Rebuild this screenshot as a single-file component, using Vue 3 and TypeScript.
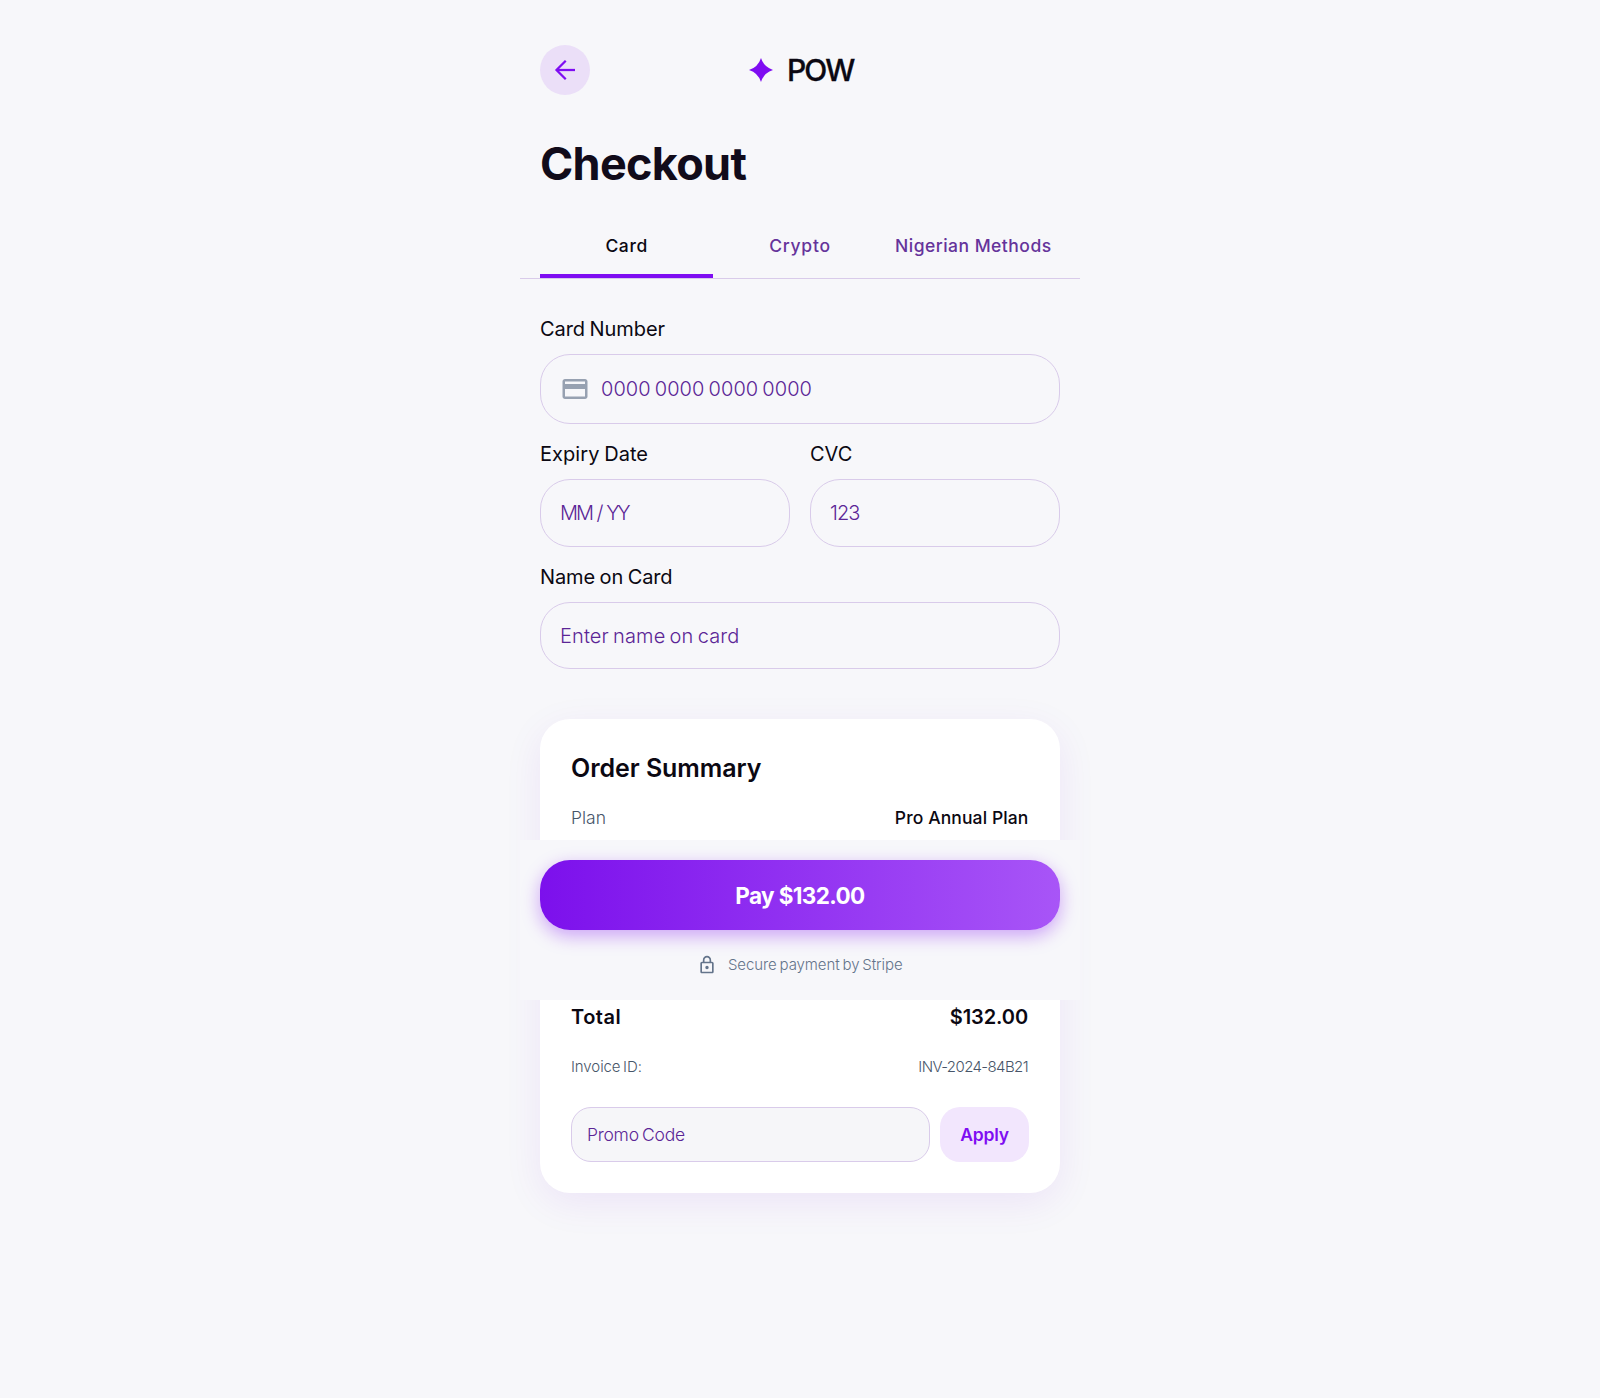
<script setup lang="ts">
import { ref } from 'vue'

type Method = 'card' | 'crypto' | 'nigerian'

interface Tab {
  id: Method
  label: string
}

const tabs: Tab[] = [
  { id: 'card', label: 'Card' },
  { id: 'crypto', label: 'Crypto' },
  { id: 'nigerian', label: 'Nigerian Methods' },
]

const active = ref<Method>('card')
const cardNumber = ref('')
const expiry = ref('')
const cvc = ref('')
const holder = ref('')
const promo = ref('')
</script>

<template>
  <main class="page">
    <header class="header">
      <button class="back" type="button">
        <svg width="30" height="30" viewBox="0 0 24 24" fill="none" stroke="currentColor" stroke-width="1.8">
          <path d="M20 12H5.4" />
          <path d="M12.6 4.6 5.2 12l7.4 7.4" />
        </svg>
      </button>
      <div class="logo">
        <svg width="30" height="30" viewBox="0 0 24 24" fill="currentColor">
          <path d="M12 2.4Q14.3 9.7 21.6 12Q14.3 14.3 12 21.6Q9.7 14.3 2.4 12Q9.7 9.7 12 2.4Z" />
        </svg>
        <span class="brand">POW</span>
      </div>
      <span class="spacer"></span>
    </header>

    <h1 class="title">Checkout</h1>

    <nav class="tabs">
      <button
        v-for="tab in tabs"
        :key="tab.id"
        type="button"
        class="tab"
        :class="[tab.id, { active: active === tab.id }]"
        @click="active = tab.id"
      >{{ tab.label }}</button>
    </nav>

    <form class="form" @submit.prevent>
      <label class="field">
        <span class="label number-label">Card Number</span>
        <span class="control with-icon">
          <svg width="30" height="30" viewBox="0 0 24 24" fill="currentColor">
            <path d="M20 4H4c-1.1 0-2 .9-2 2v12c0 1.1.9 2 2 2h16c1.1 0 2-.9 2-2V6c0-1.1-.9-2-2-2zm0 14H4v-6h16v6zm0-10H4V6h16v2z" />
          </svg>
          <input v-model="cardNumber" class="number" placeholder="0000 0000 0000 0000" />
        </span>
      </label>
      <div class="pair">
        <label class="field">
          <span class="label expiry-label">Expiry Date</span>
          <span class="control"><input v-model="expiry" class="expiry" placeholder="MM / YY" /></span>
        </label>
        <label class="field">
          <span class="label">CVC</span>
          <span class="control"><input v-model="cvc" class="cvc" placeholder="123" /></span>
        </label>
      </div>
      <label class="field">
        <span class="label name-label">Name on Card</span>
        <span class="control"><input v-model="holder" class="name" placeholder="Enter name on card" /></span>
      </label>
    </form>

    <section class="summary">
      <h2>Order Summary</h2>
      <div class="row plan">
        <span>Plan</span>
        <span class="value">Pro Annual Plan</span>
      </div>
      <div class="row total">
        <span>Total</span>
        <span class="amount">$132.00</span>
      </div>
      <div class="row invoice">
        <span>Invoice ID:</span>
        <span class="id">INV-2024-84B21</span>
      </div>
      <div class="promo">
        <input v-model="promo" placeholder="Promo Code" />
        <button type="button">Apply</button>
      </div>
    </section>

    <footer class="paybar">
      <button class="pay" type="button">Pay $132.00</button>
      <p class="secure">
        <svg width="20" height="20" viewBox="0 0 24 24" fill="currentColor">
          <path d="M18 8h-1V6c0-2.76-2.24-5-5-5S7 3.24 7 6v2H6c-1.1 0-2 .9-2 2v10c0 1.1.9 2 2 2h12c1.1 0 2-.9 2-2V10c0-1.1-.9-2-2-2zM9 6c0-1.66 1.34-3 3-3s3 1.34 3 3v2H9V6zm9 14H6V10h12v10zm-6-3c1.1 0 2-.9 2-2s-.9-2-2-2-2 .9-2 2 .9 2 2 2z" />
        </svg>
        <span>Secure payment by Stripe</span>
      </p>
    </footer>
  </main>
</template>

<style>
body {
  background: #f7f7fa;
}
</style>

<style scoped>
.page {
  position: relative;
  box-sizing: border-box;
  width: 560px;
  min-height: 1398px;
  margin: 0 auto;
  padding-top: 45px;
  font-family: Inter, "Noto Sans", sans-serif;
  color: #0b0812;
}

button,
input {
  box-sizing: border-box;
  margin: 0;
  border: 0;
  padding: 0;
  background: none;
  font: inherit;
  color: inherit;
  outline: none;
}

svg {
  display: block;
  flex: none;
}

.header {
  display: flex;
  align-items: center;
  justify-content: space-between;
  height: 50px;
  padding: 0 20px;
}

.back {
  display: flex;
  align-items: center;
  justify-content: center;
  width: 50px;
  height: 50px;
  border-radius: 50%;
  background: #ebdff8;
  color: #7f0df2;
}

.logo {
  display: flex;
  align-items: center;
  gap: 10.5px;
  color: #7f0df2;
}

.brand {
  font-size: 30px;
  font-weight: 500;
  line-height: 40px;
  letter-spacing: -1.8px;
  color: #0b0812;
  -webkit-text-stroke: 0.3px #0b0812;
}

.spacer {
  width: 50px;
}

.title {
  margin: 40px 20px 0;
  padding-top: 1px;
  font-size: 45px;
  font-weight: 650;
  line-height: 56px;
  letter-spacing: -0.7px;
  color: #110b1a;
}

.tabs {
  display: flex;
  height: 58px;
  margin-top: 28px;
  padding: 0 20px;
  border-bottom: 1px solid #d9cbea;
}

.tab {
  flex: 1 1 0;
  min-width: 0;
  height: 58px;
  border-bottom: 4px solid transparent;
  padding-bottom: 3px;
  font-size: 17.5px;
  font-weight: 550;
  line-height: 51px;
  letter-spacing: 0.6px;
  white-space: nowrap;
  color: #65339b;
}

.tab.crypto {
  letter-spacing: 0.73px;
}

.tab.nigerian {
  letter-spacing: 0.48px;
}

.tab.active {
  border-bottom-color: #7f0df2;
  color: #0b0812;
}

.form {
  display: flex;
  flex-direction: column;
  gap: 15px;
  margin: 35px 20px 0;
}

.pair {
  display: flex;
  gap: 20px;
}

.field {
  display: flex;
  flex: 1 1 0;
  flex-direction: column;
  gap: 10px;
  min-width: 0;
}

.label {
  font-size: 20px;
  font-weight: 400;
  line-height: 30px;
  word-spacing: -1px;
}

.number-label {
  letter-spacing: -0.07px;
}

.expiry-label {
  letter-spacing: 0.06px;
}

.name-label {
  letter-spacing: -0.11px;
}

.control {
  display: flex;
  align-items: center;
  gap: 11px;
  box-sizing: border-box;
  height: 67.5px;
  padding: 0 19px;
  border: 1px solid #d9cbea;
  border-radius: 30px;
}

.with-icon {
  height: 70.4px;
  color: #97a1b1;
}

.control input {
  flex: 1;
  min-width: 0;
  height: 30px;
  font-size: 20px;
  font-weight: 300;
  line-height: 30px;
  word-spacing: -1.5px;
  color: #0b0812;
}

input::placeholder {
  opacity: 1;
  color: #5b2596;
}

.number {
  letter-spacing: 0.05px;
}

.control .expiry {
  letter-spacing: -2.1px;
  word-spacing: 1.2px;
}

.control .cvc {
  letter-spacing: -0.9px;
}

.control .name {
  letter-spacing: 0.12px;
}

.summary {
  margin: 50px 20px 0;
  padding: 31px;
  border-radius: 30px;
  background: #fff;
  box-shadow: 0 10px 38px rgba(115, 13, 215, 0.08);
}

.summary h2 {
  margin: 0;
  padding-top: 1px;
  font-size: 25px;
  font-weight: 600;
  line-height: 35px;
  letter-spacing: -0.05px;
}

.row {
  display: flex;
  justify-content: space-between;
}

.plan {
  margin-top: 19px;
  font-size: 17.5px;
  font-weight: 300;
  line-height: 25px;
  color: #475569;
}

.plan .value {
  padding-right: 0.5px;
  font-weight: 450;
  letter-spacing: 0.11px;
  color: #0b0812;
}

.total {
  margin-top: 172px;
  font-size: 20px;
  font-weight: 600;
  line-height: 30px;
  letter-spacing: 0.51px;
}

.total .amount {
  padding-right: 1px;
  letter-spacing: -0.1px;
}

.invoice {
  margin-top: 25px;
  font-size: 15px;
  font-weight: 300;
  line-height: 20px;
  letter-spacing: -0.08px;
  word-spacing: -1.5px;
  color: #475569;
}

.invoice .id {
  padding-right: 1px;
  letter-spacing: -0.6px;
}

.promo {
  display: flex;
  gap: 10px;
  margin-top: 30px;
  font-size: 17.5px;
}

.promo input {
  flex: 1;
  min-width: 0;
  height: 55px;
  padding: 0 15px;
  border: 1px solid #d9cbea;
  border-radius: 20px;
  background: #f6f6f9;
  font-weight: 300;
  letter-spacing: -0.25px;
  word-spacing: -1.4px;
}

.promo button {
  width: 89px;
  height: 55px;
  border-radius: 20px;
  padding-bottom: 1px;
  background: #f2e6fd;
  font-weight: 600;
  letter-spacing: -0.2px;
  color: #7f0df2;
}

/* Payment bar floats over the order summary */
.paybar {
  position: absolute;
  top: 840px;
  left: 0;
  box-sizing: border-box;
  width: 100%;
  height: 160px;
  padding: 20px;
  background: #f7f7fa;
}

.pay {
  display: block;
  width: 100%;
  height: 70px;
  border-radius: 30px;
  background: linear-gradient(90deg, #7c10ec, #a855f7);
  box-shadow: 0 6px 18px rgba(127, 13, 242, 0.36);
  font-size: 22.5px;
  font-weight: 650;
  letter-spacing: -0.62px;
  color: #fff;
}

.secure {
  display: flex;
  align-items: center;
  justify-content: center;
  gap: 10.5px;
  height: 20px;
  margin: 25px 0 0;
  font-size: 15px;
  font-weight: 300;
  line-height: 20px;
  letter-spacing: -0.07px;
  word-spacing: -1.3px;
  color: #64748b;
}
</style>
